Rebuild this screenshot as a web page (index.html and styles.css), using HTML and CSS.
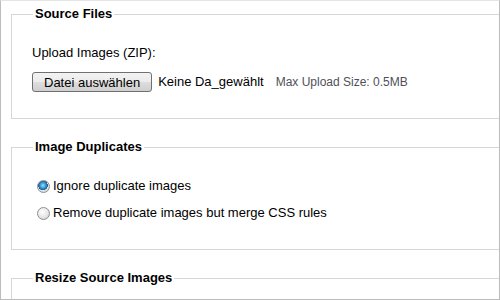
FILE: index.html
```html
<!DOCTYPE html>
<html lang="de">
<head>
<meta charset="UTF-8" />
<title>Sprite Generator</title>
<link rel="stylesheet" href="styles.css">
</head>
<body>
<div class="frame">

  <fieldset class="section">
    <legend>Source Files</legend>
    <div class="field-label">Upload Images (ZIP):</div>
    <div class="upload-row">
      <button type="button" class="file-btn">Datei auswählen</button>
      <span class="file-name">Keine Da_gewählt</span>
      <span class="hint">Max Upload Size: 0.5MB</span>
    </div>
  </fieldset>

  <fieldset class="section">
    <legend>Image Duplicates</legend>
    <div class="options">
      <label class="option"><input type="radio" name="dupes" checked> Ignore duplicate images</label>
      <label class="option"><input type="radio" name="dupes"> Remove duplicate images but merge CSS rules</label>
    </div>
  </fieldset>

  <fieldset class="section">
    <legend>Resize Source Images</legend>
  </fieldset>

</div>
</body>
</html>
```

FILE: styles.css
```css
/* 共通 */
*, *::before, *::after {
  box-sizing: border-box;
}
body {
  margin: 0;
  font-family: "Liberation Sans", Arial, sans-serif;
  font-size: 13px;
  line-height: 16px;
  color: #000;
  background: #fff;
}

/* 外枠 */
.frame {
  height: 300px;
  overflow: hidden;
  border: 1px solid #bdbdbd;
  border-top-color: #e4e4e4;
  padding: 5px 0 0 10px;
}

/* セクション */
.section {
  margin: 0 -40px 20px 0;
  padding: 0 0 26px 20px;
  border: 1px solid #d6d6d6;
  min-height: 60px;
}
.section legend {
  font-weight: bold;
  font-size: 13px;
  line-height: 16px;
  padding: 0 2px;
  margin-left: 1px;
}

/* アップロード */
.field-label {
  margin-top: 23px;
}
.upload-row {
  display: flex;
  align-items: center;
  margin-top: 11px;
  height: 20px;
}
.file-btn {
  height: 20px;
  padding: 0 11px;
  font-family: inherit;
  font-size: 13px;
  color: #000;
  border: 1px solid #707070;
  border-radius: 3px;
  background: linear-gradient(#f3f3f3 0%, #ebebeb 48%, #dddddd 52%, #cfcfcf 100%);
}
.file-name {
  margin-left: 6px;
}
.hint {
  margin-left: 12px;
  font-size: 12px;
  color: #50505a;
}

/* ラジオ */
.options {
  display: flex;
  flex-direction: column;
  gap: 11px;
  margin-top: 23px;
  padding-bottom: 2px;
}
.option {
  display: flex;
  align-items: center;
  height: 16px;
}
.option input {
  appearance: none;
  -webkit-appearance: none;
  width: 13px;
  height: 13px;
  margin: 0 3px 0 5px;
  border: 1px solid #8e8f8f;
  border-radius: 50%;
  background: radial-gradient(circle at 40% 35%, #ffffff 0%, #e6e6e6 55%, #c9c9c9 100%);
}
.option input:checked {
  background:
    radial-gradient(circle at 45% 40%, #9fe0ff 0%, #3a9ad6 30%, #1b5f91 52%, transparent 55%),
    radial-gradient(circle at 40% 35%, #ffffff 0%, #e6e6e6 55%, #c9c9c9 100%);
}
```
